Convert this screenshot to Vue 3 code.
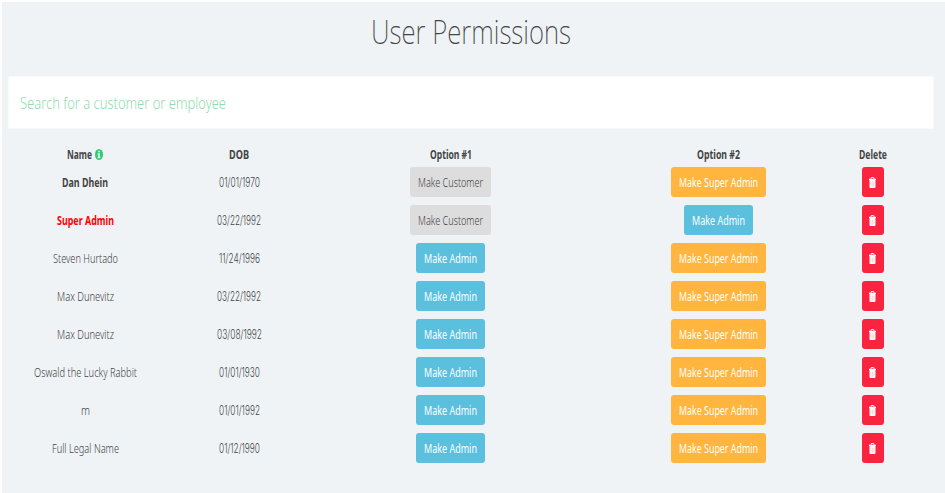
<script setup>
import { h } from 'vue'

const FitText = (props) =>
  h('svg', { class: 'fit', width: props.w, height: props.h, 'aria-label': props.text }, [
    h('text', { x: 0, y: props.base, textLength: props.w, lengthAdjust: 'spacingAndGlyphs' }, props.text)
  ])
FitText.props = ['text', 'w', 'h', 'base']

const users = [
  { name: 'Dan Dhein', w: 46, dob: '01/01/1970', dw: 41, role: 'admin' },
  { name: 'Super Admin', w: 57, dob: '03/22/1992', dw: 44, role: 'super' },
  { name: 'Steven Hurtado', w: 65, dob: '11/24/1996', dw: 41, role: 'customer' },
  { name: 'Max Dunevitz', w: 57, dob: '03/22/1992', dw: 44, role: 'customer' },
  { name: 'Max Dunevitz', w: 57, dob: '03/08/1992', dw: 45, role: 'customer' },
  { name: 'Oswald the Lucky Rabbit', w: 103, dob: '01/01/1930', dw: 41, role: 'customer' },
  { name: 'm', w: 9, dob: '01/01/1992', dw: 41, role: 'customer' },
  { name: 'Full Legal Name', w: 67, dob: '01/12/1990', dw: 41, role: 'customer' }
]
const actions = {
  customer: { text: 'Make Customer', w: 65 },
  admin: { text: 'Make Admin', w: 53 },
  super: { text: 'Make Super Admin', w: 79 }
}
const first = (u) => (u.role === 'customer' ? 'admin' : 'customer')
const second = (u) => (u.role === 'super' ? 'admin' : 'super')
</script>

<template>
  <main class="page">
    <h1 class="title"><FitText text="User Permissions" :w="200" :h="50" :base="33.5" /></h1>
    <div class="search"><FitText text="Search for a customer or employee" :w="206" :h="30" :base="21" /></div>
    <div class="table">
      <div class="row head">
        <div class="cell">
          <FitText text="Name" :w="25" :h="20" :base="14" />
          <svg class="info" width="8" height="11" viewBox="0 0 12 12" preserveAspectRatio="none">
            <circle cx="6" cy="6" r="6" fill="#2ecc71" />
            <path d="M4.8 1.8h2.4v1.7H4.8zM4 4.7h3.2v3.8H8V10H4V8.500h.8V6.200H4z" fill="#f0f4f7" />
          </svg>
        </div>
        <div class="cell"><FitText text="DOB" :w="20" :h="20" :base="14" /></div>
        <div class="cell"><FitText text="Option #1" :w="42" :h="20" :base="14" /></div>
        <div class="cell"><FitText text="Option #2" :w="43" :h="20" :base="14" /></div>
        <div class="cell"><FitText text="Delete" :w="28" :h="20" :base="14" /></div>
      </div>
      <div v-for="(u, i) in users" :key="i" class="row" :class="u.role">
        <div class="cell name"><FitText :text="u.name" :w="u.w" :h="20" :base="14.5" /></div>
        <div class="cell date"><FitText :text="u.dob" :w="u.dw" :h="20" :base="14.5" /></div>
        <div class="cell">
          <button class="btn" :class="'to-' + first(u)"><FitText v-bind="actions[first(u)]" :h="20" :base="14.5" /></button>
        </div>
        <div class="cell">
          <button class="btn" :class="'to-' + second(u)"><FitText v-bind="actions[second(u)]" :h="20" :base="14.5" /></button>
        </div>
        <div class="cell">
          <button class="btn delete" aria-label="Delete">
            <svg width="7" height="11" viewBox="0 0 14 22" preserveAspectRatio="none">
              <path d="M4 4V2q0-1 1-1h4q1 0 1 1v2" fill="none" stroke="#fff" stroke-width="1.800" />
              <path d="M0 3.500h14v2.500H0zM1 6h12v14q0 2-1.500 2h-9Q1 22 1 20z" fill="#fff" />
              <path d="M4 9v10M7 9v10M10 9v10" stroke="#fdc5b5" stroke-width="1.200" />
            </svg>
          </button>
        </div>
      </div>
    </div>
  </main>
</template>

<style>
body { margin: 0; background: #fff; }
</style>

<style scoped>
.page {
  box-sizing: border-box;
  height: 491px;
  margin: 2px 0 0 2px;
  padding: 8px 11px 0 6px;
  background: #eff3f6;
  font-family: "Noto Sans", "Open Sans", sans-serif;
  font-size: 12.5px;
  font-weight: 300;
  color: #444;
}
.fit { display: block; overflow: visible; fill: currentColor; flex: none; }
.title {
  display: flex;
  justify-content: center;
  height: 66px;
  margin: 0;
  font-size: 33.5px;
  font-weight: 200;
}
.search {
  display: flex;
  align-items: center;
  height: 51px;
  padding-left: 10.5px;
  border: 1px solid #f7f9fa;
  background: #fff;
  color: #90dcae;
  font-size: 16.5px;
}
.table { padding-top: 16px; }
.row {
  display: grid;
  grid-template-columns: 154px 154px 269px 267px 41px;
  height: 38px;
}
.head { height: 20px; margin-bottom: 2px; font-size: 12px; font-weight: 700; }
.cell { display: flex; justify-content: center; align-items: flex-start; padding-top: 5px; }
.head .cell { padding-top: 0; }
.date { font-family: Inter, "Noto Sans", sans-serif; }
.info { margin: 4px 0 0 3px; }
.admin .name, .super .name { font-weight: 700; }
.super .name { color: #f00; }
.btn {
  display: flex;
  align-items: center;
  justify-content: center;
  height: 30px;
  margin-top: -5px;
  padding: 0 8px;
  border: 0;
  border-radius: 3px;
  font: inherit;
  color: #fff;
}
.to-customer { background: #ddd; color: #444; }
.to-admin { background: #5bc0de; font-weight: 400; }
.to-super { background: #ffb53e; font-weight: 400; }
.delete { width: 22px; padding: 0; background: #f9243f; }
</style>
